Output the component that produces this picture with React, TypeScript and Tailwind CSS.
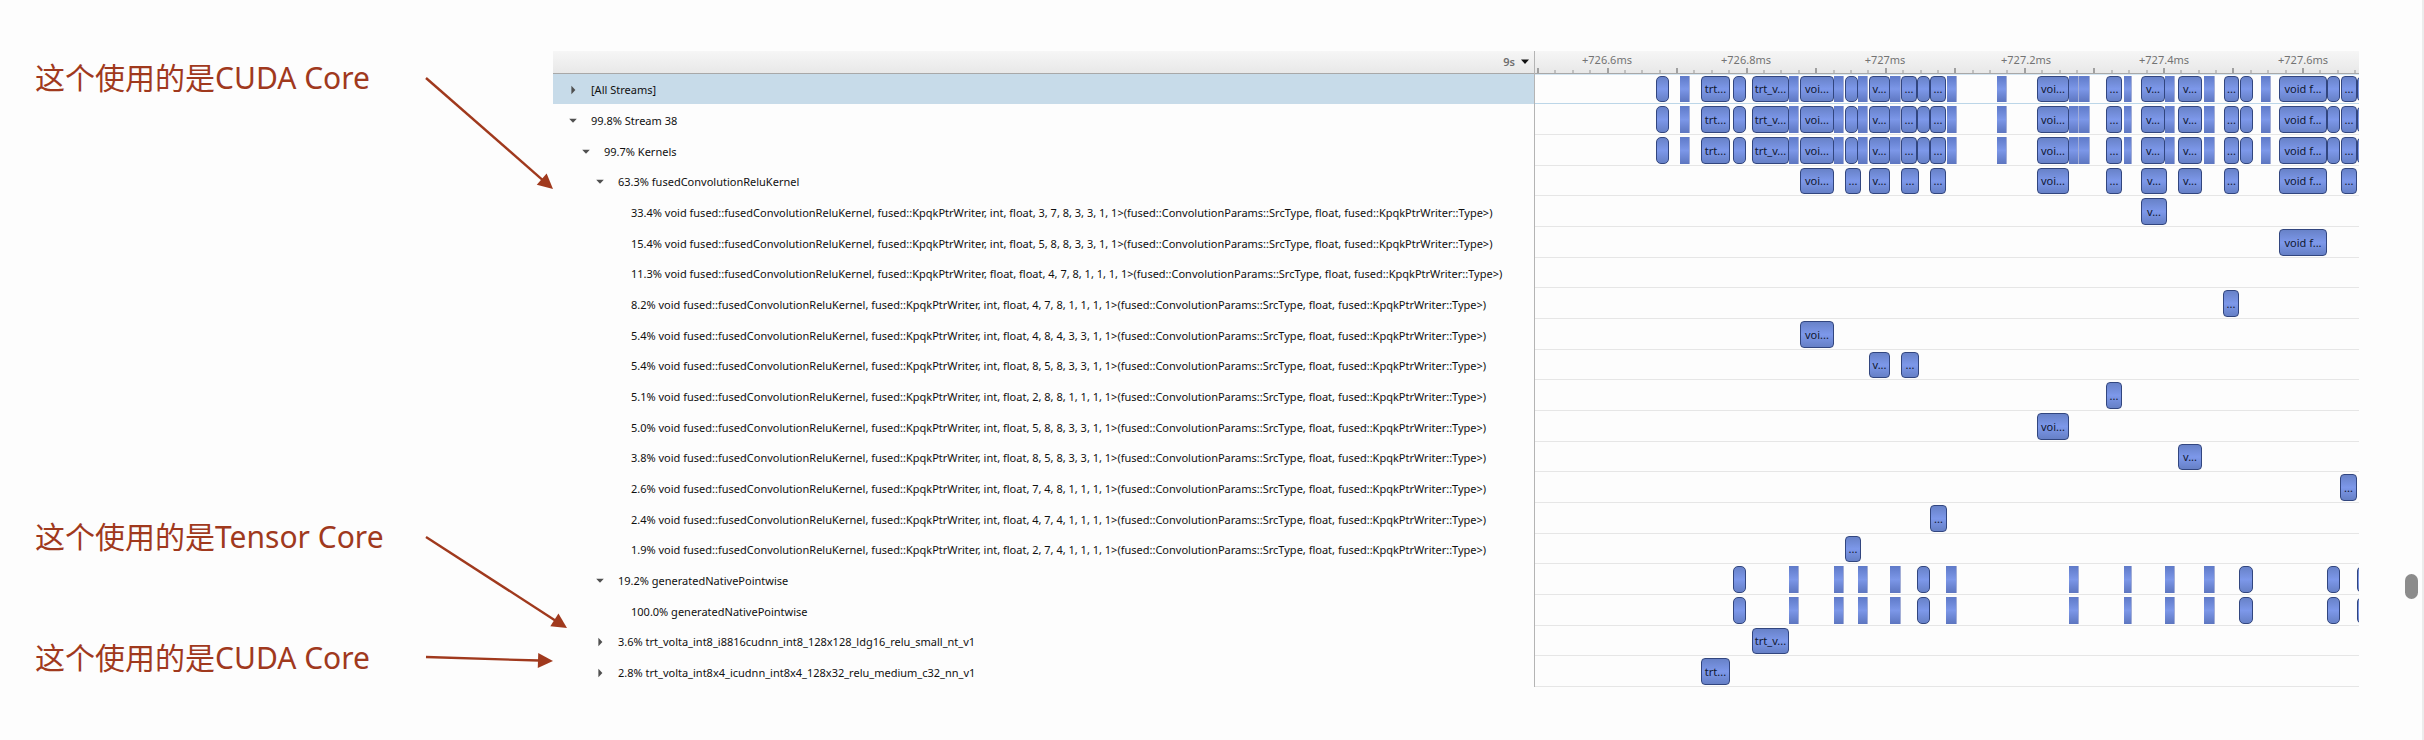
import React from "react";

type Caret = "open" | "closed" | "none";
type Kind = "box" | "pill" | "slim";
type Span = { from: number; to: number; kind: Kind; label?: string };
type Row = { label: string; level: number; caret: Caret; spans: Span[] };

const VIEW_START = 1535;
const VIEW_WIDTH = 824;

const box = (from: number, to: number, label: string): Span => ({ from, to, kind: "box", label });
const pill = (from: number, to: number): Span => ({ from, to, kind: "pill" });
const slim = (from: number, to: number): Span => ({ from, to, kind: "slim" });

const allSpans: Span[] = [
  pill(1656, 1669),
  slim(1680, 1690),
  box(1701, 1730, "trt..."),
  pill(1733, 1746),
  box(1752, 1789, "trt_v..."),
  slim(1789, 1799),
  box(1800, 1834, "voi..."),
  slim(1834, 1844),
  pill(1845, 1858),
  slim(1858, 1868),
  box(1869, 1890, "v..."),
  slim(1890, 1901),
  box(1901, 1917, "..."),
  pill(1917, 1930),
  box(1930, 1946, "..."),
  slim(1947, 1957),
  slim(1997, 2007),
  box(2037, 2069, "voi..."),
  slim(2069, 2079),
  slim(2079, 2090),
  box(2106, 2122, "..."),
  slim(2124, 2132),
  box(2141, 2165, "v..."),
  slim(2165, 2175),
  box(2178, 2202, "v..."),
  slim(2204, 2215),
  box(2224, 2239, "..."),
  pill(2240, 2253),
  slim(2261, 2271),
  box(2279, 2327, "void f..."),
  pill(2327, 2340),
  box(2341, 2357, "..."),
  pill(2357, 2370),
];

const fusedSpans: Span[] = [
  box(1800, 1834, "voi..."),
  box(1845, 1861, "..."),
  box(1869, 1890, "v..."),
  box(1901, 1919, "..."),
  box(1930, 1946, "..."),
  box(2037, 2069, "voi..."),
  box(2106, 2122, "..."),
  box(2141, 2167, "v..."),
  box(2178, 2202, "v..."),
  box(2224, 2239, "..."),
  box(2279, 2327, "void f..."),
  box(2341, 2357, "..."),
];

const pointwiseSpans: Span[] = [
  pill(1733, 1746),
  slim(1789, 1799),
  slim(1834, 1844),
  slim(1858, 1868),
  slim(1890, 1901),
  pill(1917, 1930),
  slim(1946, 1957),
  slim(2069, 2079),
  slim(2124, 2132),
  slim(2165, 2175),
  slim(2204, 2215),
  pill(2239, 2253),
  pill(2327, 2340),
  pill(2357, 2370),
];

const kernel = (percent: string, types: string, dims: string) =>
  `${percent} void fused::fusedConvolutionReluKernel, fused::KpqkPtrWriter, ${types}, ${dims}>(fused::ConvolutionParams::SrcType, float, fused::KpqkPtrWriter::Type>)`;

const leaf = (label: string, spans: Span[]): Row => ({ label, level: 3, caret: "none", spans });

const rows: Row[] = [
  { label: "[All Streams]", level: 0, caret: "closed", spans: allSpans },
  { label: "99.8% Stream 38", level: 0, caret: "open", spans: allSpans },
  { label: "99.7% Kernels", level: 1, caret: "open", spans: allSpans },
  { label: "63.3% fusedConvolutionReluKernel", level: 2, caret: "open", spans: fusedSpans },
  leaf(kernel("33.4%", "int, float", "3, 7, 8, 3, 3, 1, 1"), [box(2141, 2167, "v...")]),
  leaf(kernel("15.4%", "int, float", "5, 8, 8, 3, 3, 1, 1"), [box(2279, 2327, "void f...")]),
  leaf(kernel("11.3%", "float, float", "4, 7, 8, 1, 1, 1, 1"), []),
  leaf(kernel("8.2%", "int, float", "4, 7, 8, 1, 1, 1, 1"), [box(2223, 2239, "...")]),
  leaf(kernel("5.4%", "int, float", "4, 8, 4, 3, 3, 1, 1"), [box(1800, 1834, "voi...")]),
  leaf(kernel("5.4%", "int, float", "8, 5, 8, 3, 3, 1, 1"), [box(1869, 1890, "v..."), box(1901, 1919, "...")]),
  leaf(kernel("5.1%", "int, float", "2, 8, 8, 1, 1, 1, 1"), [box(2106, 2122, "...")]),
  leaf(kernel("5.0%", "int, float", "5, 8, 8, 3, 3, 1, 1"), [box(2037, 2069, "voi...")]),
  leaf(kernel("3.8%", "int, float", "8, 5, 8, 3, 3, 1, 1"), [box(2178, 2202, "v...")]),
  leaf(kernel("2.6%", "int, float", "7, 4, 8, 1, 1, 1, 1"), [box(2340, 2357, "...")]),
  leaf(kernel("2.4%", "int, float", "4, 7, 4, 1, 1, 1, 1"), [box(1930, 1947, "...")]),
  leaf(kernel("1.9%", "int, float", "2, 7, 4, 1, 1, 1, 1"), [box(1845, 1861, "...")]),
  { label: "19.2% generatedNativePointwise", level: 2, caret: "open", spans: pointwiseSpans },
  leaf("100.0% generatedNativePointwise", pointwiseSpans),
  {
    label: "3.6% trt_volta_int8_i8816cudnn_int8_128x128_ldg16_relu_small_nt_v1",
    level: 2,
    caret: "closed",
    spans: [box(1752, 1789, "trt_v...")],
  },
  {
    label: "2.8% trt_volta_int8x4_icudnn_int8x4_128x32_relu_medium_c32_nn_v1",
    level: 2,
    caret: "closed",
    spans: [box(1701, 1730, "trt...")],
  },
];

const indents = ["pl-[14px]", "pl-[27px]", "pl-[41px]", "pl-[54px]"];

const tickLabels = [
  { at: 1607, text: "+726.6ms" },
  { at: 1746, text: "+726.8ms" },
  { at: 1885, text: "+727ms" },
  { at: 2026, text: "+727.2ms" },
  { at: 2164, text: "+727.4ms" },
  { at: 2303, text: "+727.6ms" },
];

const ticks = Array.from({ length: 48 }, (_, i) => ({ at: 1537 + (i * 765) / 44, major: i % 4 === 0 }));

const percent = (px: number) => `${(px / VIEW_WIDTH) * 100}%`;
const place = (x: number) => percent(x - VIEW_START);

const rowHeight = "h-[31px] nth-[3n+1]:h-[30px]";

const kindClass: Record<Kind, string> = {
  box: "rounded-[4px] border border-[#32467f] bg-linear-to-b from-[#6882c8] via-[#7d98ea] to-[#6680c6]",
  pill: "rounded-[5px] border border-[#32467f] bg-linear-to-b from-[#6882c8] via-[#7d98ea] to-[#6680c6]",
  slim: "border-r border-r-[#a3aed6] bg-linear-to-b from-[#5f7ac8] via-[#7c97e8] to-[#5d76c0]",
};

function CaretIcon({ open }: { open: boolean }) {
  return (
    <svg viewBox="0 0 12 12" className="block size-3" fill="#505050" aria-hidden="true">
      {open ? <path d="M2.2 3.8h7.6L6 7.8z" /> : <path d="M4.4 1.8v8.4l4-4.2z" />}
    </svg>
  );
}

function Note({ children, className }: { children: React.ReactNode; className?: string }) {
  return (
    <p
      className={`whitespace-nowrap font-['Noto_Sans','Noto_Sans_CJK_SC',sans-serif] text-[30px] leading-10 text-[#a0391d] ${className ?? ""}`}
    >
      {children}
    </p>
  );
}

function Arrow({ x1, y1, x2, y2 }: { x1: number; y1: number; x2: number; y2: number }) {
  const length = Math.hypot(x2 - x1, y2 - y1);
  const ux = (x2 - x1) / length;
  const uy = (y2 - y1) / length;
  const bx = x2 - ux * 15;
  const by = y2 - uy * 15;
  return (
    <g>
      <line x1={x1} y1={y1} x2={bx + ux} y2={by + uy} stroke="#a0391d" strokeWidth="2.4" />
      <polygon
        points={`${x2},${y2} ${bx - uy * 7.5},${by + ux * 7.5} ${bx + uy * 7.5},${by - ux * 7.5}`}
        fill="#a0391d"
      />
    </g>
  );
}

function TreeRow({ row, selected }: { row: Row; selected: boolean }) {
  return (
    <li
      className={`flex items-center gap-3 pt-[2px] ${rowHeight} ${indents[row.level]} ${selected ? "bg-[#c7dbe9]" : ""}`}
    >
      {row.caret === "none" ? (
        <span className="size-3 shrink-0" />
      ) : (
        <button
          type="button"
          aria-label={row.label}
          aria-expanded={row.caret === "open"}
          className="size-3 shrink-0"
        >
          <CaretIcon open={row.caret === "open"} />
        </button>
      )}
      <span className="whitespace-nowrap">{row.label}</span>
    </li>
  );
}

function TimelineRow({ row, selected }: { row: Row; selected: boolean }) {
  return (
    <li
      className={`relative overflow-hidden border-b ${rowHeight} ${selected ? "border-[#bcd6e8] shadow-[inset_0_1px_0_#d5e6f2]" : "border-[#e6e6e6]"}`}
    >
      {row.spans.map((span) => (
        <div
          key={span.from}
          className={`absolute top-[2px] bottom-px flex items-center justify-center overflow-hidden whitespace-nowrap text-[#10182f] ${kindClass[span.kind]}`}
          style={{ left: place(span.from), width: percent(span.to - span.from) }}
        >
          {span.label}
        </div>
      ))}
    </li>
  );
}

export default function App() {
  return (
    <main className="flex min-h-screen items-stretch bg-[#fdfdfd] font-['Noto_Sans','Noto_Sans_CJK_SC',sans-serif] text-[11px] leading-4 text-[#101010]">
      <section className="relative w-[553px] shrink-0 pt-[58px] pl-[35px]">
        <Note>这个使用的是CUDA Core</Note>
        <Note className="mt-[419px]">这个使用的是Tensor Core</Note>
        <Note className="mt-[81px]">这个使用的是CUDA Core</Note>
        <svg
          className="pointer-events-none absolute top-0 left-0 h-[740px] w-[580px] max-w-none"
          viewBox="0 0 580 740"
          aria-hidden="true"
        >
          <Arrow x1={426} y1={78} x2={553} y2={189} />
          <Arrow x1={426} y1={537} x2={567} y2={628} />
          <Arrow x1={426} y1={657} x2={553} y2={661} />
        </svg>
      </section>

      <section className="flex min-w-0 grow items-start pt-[51px]">
        <div className="w-[981px] shrink-0">
          <div className="flex h-[23px] items-center justify-end border-b border-[#a8a8a8] bg-linear-to-b from-[#f6f6f6] to-[#e8e8e8] pr-1">
            <button type="button" className="flex items-center gap-[5px] font-semibold text-[#6f6f6f]">
              9s
              <svg viewBox="0 0 10 6" className="h-[6px] w-[10px]" fill="#111" aria-hidden="true">
                <path d="M1 .6h8L5 5z" />
              </svg>
            </button>
          </div>
          <ul>
            {rows.map((row, i) => (
              <TreeRow key={i} row={row} selected={i === 0} />
            ))}
          </ul>
        </div>

        <div className="min-w-0 grow border-l border-[#b4b4b4]">
          <div className="relative h-[23px] overflow-hidden border-b border-[#a8a8a8] bg-linear-to-b from-[#f6f6f6] to-[#e8e8e8] text-[#737373]">
            {tickLabels.map((tick) => (
              <span key={tick.text} className="absolute top-px -translate-x-1/2" style={{ left: place(tick.at) }}>
                {tick.text}
              </span>
            ))}
            {ticks.map((tick) => (
              <span
                key={tick.at}
                className={`absolute bottom-0 w-[2px] ${tick.major ? "h-[5px] bg-[#a0a0a0]" : "h-[3px] bg-[#c0c0c0]"}`}
                style={{ left: place(tick.at) }}
              />
            ))}
          </div>
          <ul>
            {rows.map((row, i) => (
              <TimelineRow key={i} row={row} selected={i === 0} />
            ))}
          </ul>
        </div>
      </section>

      <aside className="flex w-[65px] shrink-0 justify-end border-r-2 border-[#ececec] pt-[574px] pr-1">
        <div className="h-[25px] w-[13px] rounded-full bg-[#8c8c8c]" />
      </aside>
    </main>
  );
}
